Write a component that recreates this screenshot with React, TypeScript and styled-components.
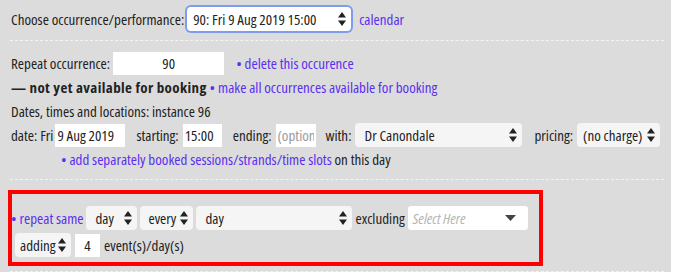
import React from "react";
import styled, { createGlobalStyle } from "styled-components";

const GlobalStyle = createGlobalStyle`
  html, body {
    margin: 0;
    padding: 0;
    background: #ffffff;
  }
  body {
    font-family: "Open Sans", "Liberation Sans", sans-serif;
    font-stretch: 75%;
    font-weight: 400;
    font-size: 15px;
    color: #222;
  }
`;

const Panel = styled.div`
  width: 671px;
  background: #dcdcdc;
  padding: 0 7px 0 10px;
  box-sizing: border-box;
  position: relative;
`;

const Section = styled.section<{ $top: number; $bottom: number }>`
  padding: ${(p) => p.$top}px 0 ${(p) => p.$bottom}px 1px;
  border-bottom: 1px dashed #f4f4f4;
  display: flex;
  flex-direction: column;
`;

const Row = styled.div<{ $h?: number; $indent?: number; $gap?: number }>`
  display: flex;
  align-items: center;
  gap: ${(p) => p.$gap ?? 4}px;
  height: ${(p) => p.$h ?? 24}px;
  padding-left: ${(p) => p.$indent ?? 0}px;
  white-space: nowrap;
`;

const Label = styled.span<{ $ml?: number }>`
  margin-left: ${(p) => p.$ml ?? 0}px;
`;

const Link = styled.a<{ $ml?: number }>`
  color: #5b2ff0;
  text-decoration: none;
  cursor: pointer;
  margin-left: ${(p) => p.$ml ?? 0}px;
`;

const Strong = styled.span`
  font-weight: 700;
  letter-spacing: 0.4px;
`;

const TextBox = styled.div<{ $w: number; $center?: boolean; $ml?: number }>`
  width: ${(p) => p.$w}px;
  height: 23px;
  background: #fff;
  display: flex;
  align-items: center;
  justify-content: ${(p) => (p.$center ? "center" : "flex-start")};
  padding: 0 2px;
  box-sizing: border-box;
  margin-left: ${(p) => p.$ml ?? 0}px;
  overflow: hidden;
  flex-shrink: 0;
`;

const Placeholder = styled.span`
  display: block;
  width: 100%;
  overflow: hidden;
  color: #9a9a9a;
`;

const SelectBox = styled.div<{ $w: number; $focus?: boolean; $white?: boolean; $pad?: number }>`
  width: ${(p) => p.$w}px;
  height: 24px;
  background: ${(p) => (p.$white ? "#fff" : "#f5f5f5")};
  border-radius: 4px;
  display: flex;
  align-items: center;
  justify-content: space-between;
  padding: 0 5px 0 ${(p) => p.$pad ?? 9}px;
  box-sizing: border-box;
  flex-shrink: 0;
  box-shadow: ${(p) => (p.$focus ? "0 0 0 2px #7d9bf0" : "none")};
`;

const ChosenBox = styled.div`
  width: 120px;
  height: 24px;
  background: #fff;
  border-radius: 3px;
  display: flex;
  align-items: center;
  justify-content: space-between;
  padding: 0 12px 0 5px;
  box-sizing: border-box;
  color: #b5b5b5;
  font-style: italic;
  flex-shrink: 0;
`;

const Highlight = styled.div`
  position: absolute;
  left: 8px;
  top: 190px;
  width: 535px;
  height: 76px;
  border: 4px solid #ff0000;
  box-sizing: border-box;
  pointer-events: none;
`;

const Arrows = () => (
  <svg width="8" height="14" viewBox="0 0 8 14">
    <path d="M4 0 L8 5.5 L0 5.5 Z M0 8.5 L8 8.5 L4 14 Z" fill="#222" />
  </svg>
);

const Caret = () => (
  <svg width="11" height="6" viewBox="0 0 11 6">
    <path d="M0 0 L11 0 L5.5 6 Z" fill="#444" />
  </svg>
);

type SelectProps = {
  w: number;
  children: React.ReactNode;
  focus?: boolean;
  white?: boolean;
  pad?: number;
};

const Select = ({ w, children, focus, white, pad }: SelectProps) => (
  <SelectBox $w={w} $focus={focus} $white={white} $pad={pad}>
    <span>{children}</span>
    <Arrows />
  </SelectBox>
);

const App = () => {
  return (
    <>
      <GlobalStyle />
      <Panel>
        <Section $top={5} $bottom={8}>
          <Row $h={27} $gap={3}>
            <span>Choose occurrence/performance:</span>
            <Select w={164} focus white pad={6}>
              90: Fri 9 Aug 2019 15:00
            </Select>
            <Link $ml={5}>calendar</Link>
          </Row>
        </Section>
        <Section $top={10} $bottom={8}>
          <Row $gap={3}>
            <span>Repeat occurrence:</span>
            <TextBox $w={111} $center>
              90
            </TextBox>
            <Link $ml={9}>• delete this occurence</Link>
          </Row>
          <Row>
            <span>
              <Strong>— not yet available for booking</Strong> <Link>• make all occurrences available for booking</Link>
            </span>
          </Row>
          <Row>
            <span>Dates, times and locations: instance 96</span>
          </Row>
          <Row>
            <span>date: Fri</span>
            <TextBox $w={70} $ml={-2}>
              9 Aug 2019
            </TextBox>
            <Label $ml={7}>starting:</Label>
            <TextBox $w={39}>15:00</TextBox>
            <Label $ml={7}>ending:</Label>
            <TextBox $w={40}>
              <Placeholder>(optional)</Placeholder>
            </TextBox>
            <Label $ml={6}>with:</Label>
            <Select w={167}>Dr Canondale</Select>
            <Label $ml={8}>pricing:</Label>
            <Select w={83} pad={6}>
              (no charge)
            </Select>
          </Row>
          <Row $indent={50}>
            <span>
              <Link>• add separately booked sessions/strands/time slots</Link> on this day
            </span>
          </Row>
        </Section>
        <Section $top={24} $bottom={12}>
          <Row $h={27} $gap={3}>
            <Link>• repeat same</Link>
            <Select w={51}>day</Select>
            <Select w={53} pad={8}>
              every
            </Select>
            <Select w={156}>day</Select>
            <span>excluding</span>
            <ChosenBox>
              <span>Select Here</span>
              <Caret />
            </ChosenBox>
          </Row>
          <Row $h={28} $indent={4}>
            <Select w={56} pad={5}>
              adding
            </Select>
            <TextBox $w={25} $center>
              4
            </TextBox>
            <span>event(s)/day(s)</span>
          </Row>
        </Section>
        <Highlight />
      </Panel>
    </>
  );
};

export default App;
